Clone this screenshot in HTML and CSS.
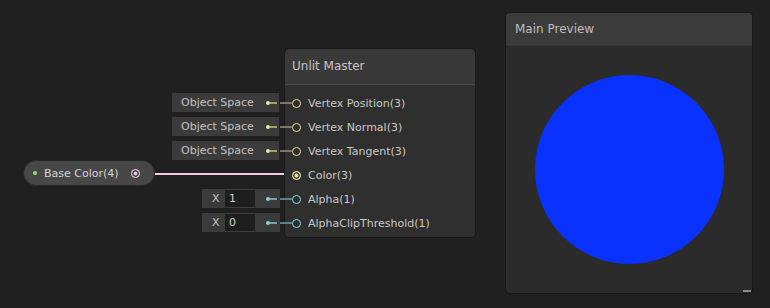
FILE: index.html
```html
<!DOCTYPE html>
<html lang="en">

<head>
    <meta charset="UTF-8">
    <title>Shader Graph</title>
    <link rel="stylesheet" href="styles.css">
</head>

<body>
    <div class="canvas">
        <!-- edge from Base Color to Color(3) -->
        <div class="edge"></div>

        <div class="prop-node">
            <span class="dot green"></span>
            <span class="prop-label">Base Color(4)</span>
            <span class="port pink"></span>
        </div>

        <div class="master">
            <div class="master-title">Unlit Master</div>
            <div class="master-body">
                <div class="row">
                    <div class="slot"><span class="slot-text">Object Space</span><span class="slot-dot yellow"></span></div>
                    <span class="link yellow-link"></span>
                    <span class="port yellow"></span>
                    <span class="row-label">Vertex Position(3)</span>
                </div>
                <div class="row">
                    <div class="slot"><span class="slot-text">Object Space</span><span class="slot-dot yellow"></span></div>
                    <span class="link yellow-link"></span>
                    <span class="port yellow"></span>
                    <span class="row-label">Vertex Normal(3)</span>
                </div>
                <div class="row">
                    <div class="slot"><span class="slot-text">Object Space</span><span class="slot-dot yellow"></span></div>
                    <span class="link yellow-link"></span>
                    <span class="port yellow"></span>
                    <span class="row-label">Vertex Tangent(3)</span>
                </div>
                <div class="row">
                    <span class="port yellow filled"></span>
                    <span class="row-label">Color(3)</span>
                </div>
                <div class="row">
                    <div class="slot slot-num"><span class="axis">X</span><span class="field">1</span><span class="slot-dot cyan"></span></div>
                    <span class="link cyan-link"></span>
                    <span class="port cyan"></span>
                    <span class="row-label">Alpha(1)</span>
                </div>
                <div class="row">
                    <div class="slot slot-num"><span class="axis">X</span><span class="field">0</span><span class="slot-dot cyan"></span></div>
                    <span class="link cyan-link"></span>
                    <span class="port cyan"></span>
                    <span class="row-label">AlphaClipThreshold(1)</span>
                </div>
            </div>
        </div>

        <div class="preview">
            <div class="preview-title">Main Preview</div>
            <div class="preview-body">
                <div class="sphere"></div>
            </div>
            <span class="grip"></span>
        </div>
    </div>
</body>

</html>
```

FILE: styles.css
```css
body {
    margin: 0;
    background-color: #202020;
    font-family: "DejaVu Sans", "Noto Sans", sans-serif;
    font-size: 11px;
    color: #c8c8c8;
}

.canvas {
    position: relative;
    width: 770px;
    height: 308px;
    overflow: hidden;
}

/* edge */
.edge {
    position: absolute;
    left: 150px;
    top: 173px;
    width: 142px;
    height: 2px;
    background-color: #f2cde4;
}

/* property node */
.prop-node {
    position: absolute;
    left: 23px;
    top: 160px;
    width: 130px;
    height: 24px;
    display: flex;
    align-items: center;
    background-color: #474747;
    border: 1px solid #2a2a2a;
    border-radius: 13px;
}

.prop-label {
    margin-left: 7px;
    flex: 1;
    color: #d2d2d2;
}

.dot {
    width: 4px;
    height: 4px;
    border-radius: 50%;
    margin-left: 9px;
}

.dot.green {
    background-color: #8ee06a;
}

/* ports */
.port {
    box-sizing: border-box;
    width: 9px;
    height: 9px;
    border-radius: 50%;
    border: 1.5px solid #e0e0a0;
    background-color: #2c2c20;
    flex-shrink: 0;
}

.port.pink {
    border-color: #e8c2dc;
    background-color: #e8c2dc;
    box-shadow: inset 0 0 0 1.5px #3a3a3a;
    margin-right: 14px;
}

.port.yellow {
    border-color: #e6e6a6;
}

.port.filled {
    background-color: #e6e6a6;
    box-shadow: inset 0 0 0 1.5px #3a3a30;
}

.port.cyan {
    border-color: #92d4dc;
    background-color: #1e3034;
}

/* master node */
.master {
    position: absolute;
    left: 284px;
    top: 48px;
    width: 192px;
    height: 190px;
    background-color: #2f2f2f;
    border: 1px solid #1a1a1a;
    border-radius: 5px;
    box-sizing: border-box;
}

.master-title {
    height: 35px;
    line-height: 34px;
    padding-left: 7px;
    font-size: 12px;
    color: #c6c6c6;
    background-color: #393939;
    border-bottom: 1px solid #4a4a4a;
    border-radius: 5px 5px 0 0;
}

.master-body {
    padding-top: 6px;
}

.row {
    position: relative;
    height: 24px;
    display: flex;
    align-items: center;
    padding-left: 7px;
}

.row-label {
    margin-left: 7px;
    color: #c8c8c8;
}

/* inline slot values */
.slot {
    position: absolute;
    right: 196px;
    top: 2px;
    width: 107px;
    height: 19px;
    display: flex;
    align-items: center;
    background-color: #3b3b3b;
    color: #c0c0c0;
}

.slot-text {
    margin-left: 9px;
    flex: 1;
}

.slot-num {
    width: 78px;
    right: 195px;
}

.axis {
    margin-left: 10px;
    width: 13px;
}

.field {
    width: 26px;
    height: 17px;
    line-height: 17px;
    padding-left: 4px;
    background-color: #1e1e1e;
    color: #d0d0d0;
    flex: none;
    margin-right: auto;
}

.slot-dot {
    width: 4px;
    height: 4px;
    border-radius: 50%;
    margin-right: 9px;
    flex: none;
}

.slot-dot.yellow {
    background-color: #e6e6a6;
}

.slot-dot.cyan {
    background-color: #92d4dc;
}

.slot-num .slot-dot {
    margin-right: 10px;
}

.link {
    position: absolute;
    left: -15px;
    top: 11px;
    width: 22px;
    height: 2px;
}

.yellow-link {
    background: linear-gradient(to right, #a0a070 0 7px, transparent 7px 10px, #7a7a60 10px);
}

.cyan-link {
    background: linear-gradient(to right, #70a0a8 0 7px, transparent 7px 10px, #5a8088 10px);
}

/* main preview */
.preview {
    position: absolute;
    left: 505px;
    top: 12px;
    width: 248px;
    height: 282px;
    background-color: #2b2b2b;
    border: 1px solid #181818;
    border-radius: 4px;
    box-sizing: border-box;
    display: flex;
    flex-direction: column;
}

.preview-title {
    height: 32px;
    line-height: 32px;
    padding-left: 9px;
    font-size: 12px;
    color: #bdbdbd;
    background-color: #3b3b3b;
    border-bottom: 1px solid #333;
    border-radius: 4px 4px 0 0;
}

.preview-body {
    flex: 1;
    display: flex;
    justify-content: center;
    align-items: center;
}

.sphere {
    width: 189px;
    height: 189px;
    border-radius: 50%;
    background-color: #0a32ff;
    margin-left: 1px;
}

.grip {
    position: absolute;
    right: 1px;
    bottom: 1px;
    width: 8px;
    height: 2px;
    background-color: #8a8a8a;
}
```
